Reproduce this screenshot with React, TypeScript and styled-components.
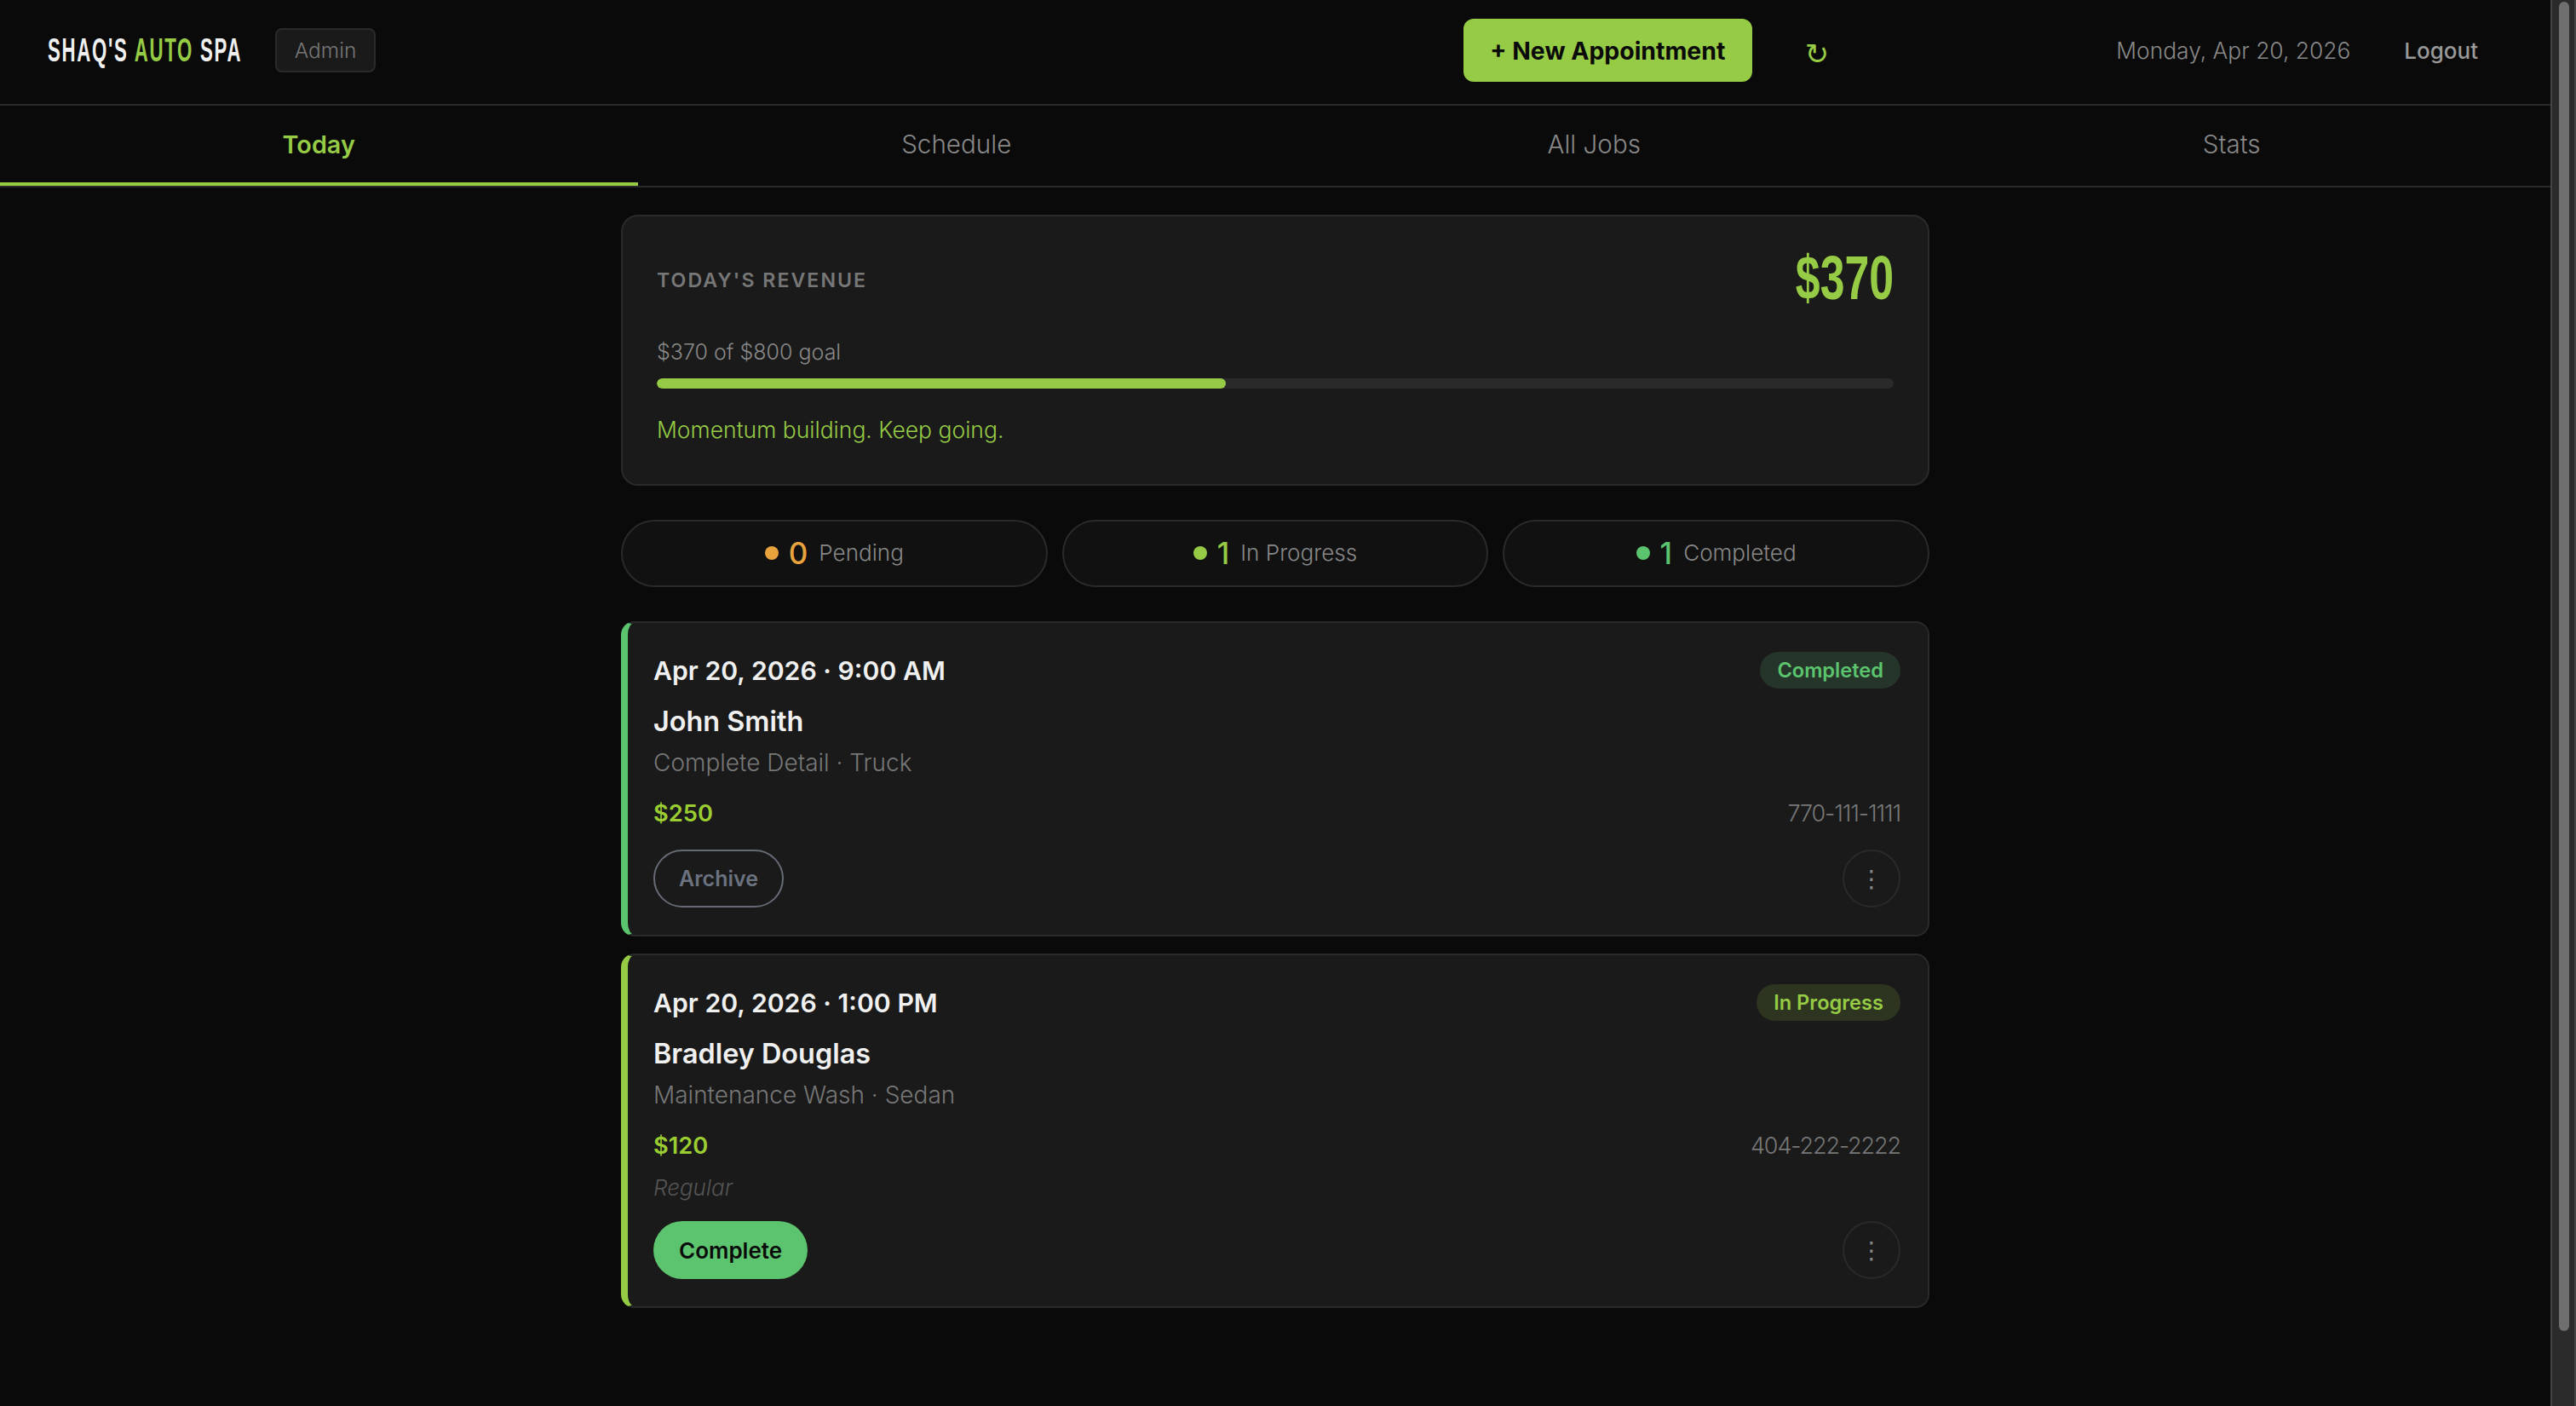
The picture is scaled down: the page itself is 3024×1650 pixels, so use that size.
import React from "react";
import styled, { createGlobalStyle } from "styled-components";

const LIME = "#96cb45";
const GREEN = "#5cc46e";
const ORANGE = "#e8a33d";
const BODY = `Inter, "Noto Sans", sans-serif`;
const DISPLAY = `"Liberation Sans", sans-serif`;

const GlobalStyle = createGlobalStyle`
  html, body {
    margin: 0;
    padding: 0;
    height: 100%;
    overflow: hidden;
    background: #0a0a0a;
    font-family: ${BODY};
  }
`;

const Shell = styled.div`
  display: flex;
  height: 1650px;
`;

const Page = styled.div`
  flex: 1;
  min-width: 0;
`;

const ScrollTrack = styled.div`
  width: 30px;
  height: 100%;
  box-sizing: border-box;
  padding: 2px 6px 0 8px;
  background: #2b2b2b;
  border-left: 2px solid #444;
  border-right: 2px solid #444;
`;

const ScrollThumb = styled.div`
  height: 1560px;
  border-radius: 8px;
  background: #6e6e6e;
`;

const Header = styled.header`
  height: 124px;
  box-sizing: border-box;
  padding: 0 57px 4px 56px;
  display: flex;
  align-items: center;
  border-bottom: 2px solid #2a2a2a;
`;

const Brand = styled.div`
  display: flex;
  align-items: center;
  gap: 38px;
`;

const LogoBox = styled.div`
  width: 229px;
`;

const Logo = styled.div`
  display: inline-block;
  font-family: ${DISPLAY};
  font-size: 39px;
  font-weight: 700;
  line-height: 48px;
  letter-spacing: 3px;
  color: #f0f0f0;
  white-space: pre;
  transform: scaleX(0.57);
  transform-origin: left center;
`;

const LogoAccent = styled.span`
  color: ${LIME};
`;

const RoleBadge = styled.div`
  width: 118px;
  height: 52px;
  box-sizing: border-box;
  display: flex;
  align-items: center;
  justify-content: center;
  background: #1a1a1a;
  border: 2px solid #2a2a2a;
  border-radius: 8px;
  color: #777;
  font-size: 24.5px;
  font-weight: 300;
`;

const HeaderActions = styled.div`
  margin-left: auto;
  margin-right: 337px;
  display: flex;
  align-items: center;
  gap: 62px;
`;

const NewButton = styled.button`
  width: 339px;
  height: 74px;
  border: none;
  border-radius: 12px;
  background: ${LIME};
  color: #0a0a0a;
  font-family: ${BODY};
  font-size: 28.4px;
  font-weight: 700;
  padding: 0;
`;

const Refresh = styled.span`
  font-family: "DejaVu Sans", sans-serif;
  font-size: 34px;
  line-height: 40px;
  color: ${LIME};
  margin-top: 8px;
`;

const HeaderRight = styled.div`
  display: flex;
  align-items: center;
  gap: 32px;
`;

const DateText = styled.div`
  font-size: 26.4px;
  font-weight: 300;
  color: #888;
  width: 278px;
  white-space: nowrap;
`;

const Logout = styled.div`
  font-size: 26px;
  font-weight: 500;
  color: #999;
  padding: 0 28px;
`;

const Tabs = styled.nav`
  display: grid;
  grid-template-columns: repeat(4, 1fr);
  height: 96px;
  box-sizing: border-box;
  border-bottom: 2px solid #2a2a2a;
`;

const Tab = styled.div<{ $active?: boolean }>`
  display: flex;
  align-items: center;
  justify-content: center;
  box-sizing: border-box;
  border-bottom: 4px solid ${(p) => (p.$active ? LIME : "transparent")};
  color: ${(p) => (p.$active ? LIME : "#888")};
  font-size: ${(p) => (p.$active ? 28.8 : 29.6)}px;
  font-weight: ${(p) => (p.$active ? 600 : 300)};
`;

const Main = styled.main`
  width: 1536px;
  margin: 0 auto;
  padding-top: 32px;
`;

const RevenueCard = styled.section`
  height: 318px;
  box-sizing: border-box;
  padding: 34px 40px 0 40px;
  background: #1a1a1a;
  border: 2px solid #2a2a2a;
  border-radius: 20px;
`;

const RevenueTop = styled.div`
  display: flex;
  align-items: center;
  justify-content: space-between;
  height: 76px;
`;

const RevenueLabel = styled.div`
  font-size: 23.2px;
  font-weight: 600;
  letter-spacing: 2px;
  color: #777;
  margin-top: 6px;
`;

const RevenueAmount = styled.div`
  font-family: ${DISPLAY};
  font-size: 72px;
  font-weight: 700;
  line-height: 76px;
  color: ${LIME};
  transform: scaleX(0.72);
  transform-origin: right center;
`;

const GoalText = styled.div`
  margin-top: 33px;
  font-size: 25px;
  font-weight: 300;
  line-height: 32px;
  color: #888;
`;

const ProgressTrack = styled.div`
  margin-top: 15px;
  height: 12px;
  border-radius: 6px;
  background: #2a2a2a;
  overflow: hidden;
`;

const ProgressFill = styled.div`
  height: 100%;
  border-radius: 6px;
  background: ${LIME};
`;

const Motivation = styled.div`
  margin-top: 31px;
  font-size: 26.5px;
  font-weight: 300;
  line-height: 34px;
  color: ${LIME};
`;

const StatRow = styled.div`
  margin: 40px 0;
  display: grid;
  grid-template-columns: repeat(3, 1fr);
  gap: 17px;
`;

const StatPill = styled.div`
  height: 79px;
  box-sizing: border-box;
  padding-bottom: 2px;
  display: flex;
  align-items: center;
  justify-content: center;
  background: #111;
  border: 2px solid #2a2a2a;
  border-radius: 40px;
`;

const StatDot = styled.span<{ $color: string }>`
  width: 16px;
  height: 16px;
  border-radius: 50%;
  background: ${(p) => p.$color};
  margin-right: 12px;
`;

const StatCount = styled.span<{ $color: string }>`
  font-size: 35px;
  font-weight: 500;
  color: ${(p) => p.$color};
  margin-right: 13px;
`;

const StatLabel = styled.span`
  font-size: 26.1px;
  font-weight: 300;
  color: #888;
`;

const JobList = styled.div`
  display: flex;
  flex-direction: column;
  gap: 20px;
`;

const JobCard = styled.article<{ $accent: string }>`
  box-sizing: border-box;
  padding: 34px 32px 32px 30px;
  background: #1a1a1a;
  border: 2px solid #2a2a2a;
  border-left: 8px solid ${(p) => p.$accent};
  border-radius: 16px;
`;

const Row = styled.div`
  display: flex;
  align-items: center;
  justify-content: space-between;
`;

const JobWhen = styled.div`
  font-size: 30.2px;
  font-weight: 600;
  color: #f0f0f0;
`;

const StatusBadge = styled.div<{ $color: string; $bg: string }>`
  height: 43px;
  padding: 0 20px;
  display: flex;
  align-items: center;
  border-radius: 22px;
  background: ${(p) => p.$bg};
  color: ${(p) => p.$color};
  font-size: 23.6px;
  font-weight: 600;
`;

const JobName = styled.div`
  margin-top: 19px;
  font-size: 32.4px;
  font-weight: 600;
  line-height: 40px;
  color: #f0f0f0;
`;

const JobService = styled.div`
  margin-top: 10px;
  font-size: 28px;
  font-weight: 300;
  line-height: 36px;
  color: #777;
`;

const PriceRow = styled(Row)`
  margin-top: 23px;
  height: 36px;
`;

const Price = styled.div`
  font-size: 27.3px;
  font-weight: 600;
  color: #9acd32;
`;

const Phone = styled.div`
  font-size: 27px;
  font-weight: 300;
  letter-spacing: -1.1px;
  color: #777;
`;

const JobNote = styled.div`
  margin-top: 15px;
  font-size: 26px;
  font-style: italic;
  font-weight: 300;
  line-height: 34px;
  color: #555;
`;

const ActionRow = styled(Row)<{ $gap: number }>`
  margin-top: ${(p) => p.$gap}px;
`;

const ActionButton = styled.button<{ $primary?: boolean }>`
  height: 68px;
  box-sizing: border-box;
  padding: 0 ${(p) => (p.$primary ? 30 : 28)}px;
  border-radius: 34px;
  border: ${(p) => (p.$primary ? "none" : "2px solid #666a75")};
  background: ${(p) => (p.$primary ? GREEN : "transparent")};
  color: ${(p) => (p.$primary ? "#0a0a0a" : "#6b7280")};
  font-family: ${BODY};
  font-size: ${(p) => (p.$primary ? 26 : 25)}px;
  font-weight: 600;
`;

const MenuButton = styled.button`
  width: 68px;
  height: 68px;
  padding: 0;
  box-sizing: border-box;
  border-radius: 50%;
  border: 2px solid #2a2a2a;
  background: transparent;
  color: #888;
  font-family: "DejaVu Sans", sans-serif;
  font-size: 28px;
`;

interface Job {
  when: string;
  name: string;
  service: string;
  price: string;
  phone: string;
  status: string;
  accent: string;
  badgeBg: string;
  note?: string;
  action: string;
  primary?: boolean;
}

const jobs: Job[] = [
  {
    when: "Apr 20, 2026 · 9:00 AM",
    name: "John Smith",
    service: "Complete Detail · Truck",
    price: "$250",
    phone: "770-111-1111",
    status: "Completed",
    accent: GREEN,
    badgeBg: "#26352a",
    action: "Archive",
  },
  {
    when: "Apr 20, 2026 · 1:00 PM",
    name: "Bradley Douglas",
    service: "Maintenance Wash · Sedan",
    price: "$120",
    phone: "404-222-2222",
    status: "In Progress",
    accent: LIME,
    badgeBg: "#2d3521",
    note: "Regular",
    action: "Complete",
    primary: true,
  },
];

const stats = [
  { count: 0, label: "Pending", color: ORANGE },
  { count: 1, label: "In Progress", color: LIME },
  { count: 1, label: "Completed", color: GREEN },
];

const tabs = ["Today", "Schedule", "All Jobs", "Stats"];

const App: React.FC = () => {
  const revenue = 370;
  const goal = 800;

  return (
    <Shell>
      <GlobalStyle />
      <Page>
        <Header>
          <Brand>
            <LogoBox>
              <Logo>
                SHAQ'S <LogoAccent>AUTO</LogoAccent> SPA
              </Logo>
            </LogoBox>
            <RoleBadge>Admin</RoleBadge>
          </Brand>
          <HeaderActions>
            <NewButton>+ New Appointment</NewButton>
            <Refresh>↻</Refresh>
          </HeaderActions>
          <HeaderRight>
            <DateText>Monday, Apr 20, 2026</DateText>
            <Logout>Logout</Logout>
          </HeaderRight>
        </Header>
        <Tabs>
          {tabs.map((tab, i) => (
            <Tab key={tab} $active={i === 0}>
              {tab}
            </Tab>
          ))}
        </Tabs>
        <Main>
          <RevenueCard>
            <RevenueTop>
              <RevenueLabel>TODAY'S REVENUE</RevenueLabel>
              <RevenueAmount>${revenue}</RevenueAmount>
            </RevenueTop>
            <GoalText>
              ${revenue} of ${goal} goal
            </GoalText>
            <ProgressTrack>
              <ProgressFill style={{ width: `${Math.round((revenue / goal) * 100)}%` }} />
            </ProgressTrack>
            <Motivation>Momentum building. Keep going.</Motivation>
          </RevenueCard>
          <StatRow>
            {stats.map((stat) => (
              <StatPill key={stat.label}>
                <StatDot $color={stat.color} />
                <StatCount $color={stat.color}>{stat.count}</StatCount>
                <StatLabel>{stat.label}</StatLabel>
              </StatPill>
            ))}
          </StatRow>
          <JobList>
            {jobs.map((job) => (
              <JobCard key={job.name} $accent={job.accent}>
                <Row>
                  <JobWhen>{job.when}</JobWhen>
                  <StatusBadge $color={job.accent} $bg={job.badgeBg}>
                    {job.status}
                  </StatusBadge>
                </Row>
                <JobName>{job.name}</JobName>
                <JobService>{job.service}</JobService>
                <PriceRow>
                  <Price>{job.price}</Price>
                  <Phone>{job.phone}</Phone>
                </PriceRow>
                {job.note && <JobNote>{job.note}</JobNote>}
                <ActionRow $gap={job.note ? 22 : 25}>
                  <ActionButton $primary={job.primary}>{job.action}</ActionButton>
                  <MenuButton>⋮</MenuButton>
                </ActionRow>
              </JobCard>
            ))}
          </JobList>
        </Main>
      </Page>
      <ScrollTrack>
        <ScrollThumb />
      </ScrollTrack>
    </Shell>
  );
};

export default App;
